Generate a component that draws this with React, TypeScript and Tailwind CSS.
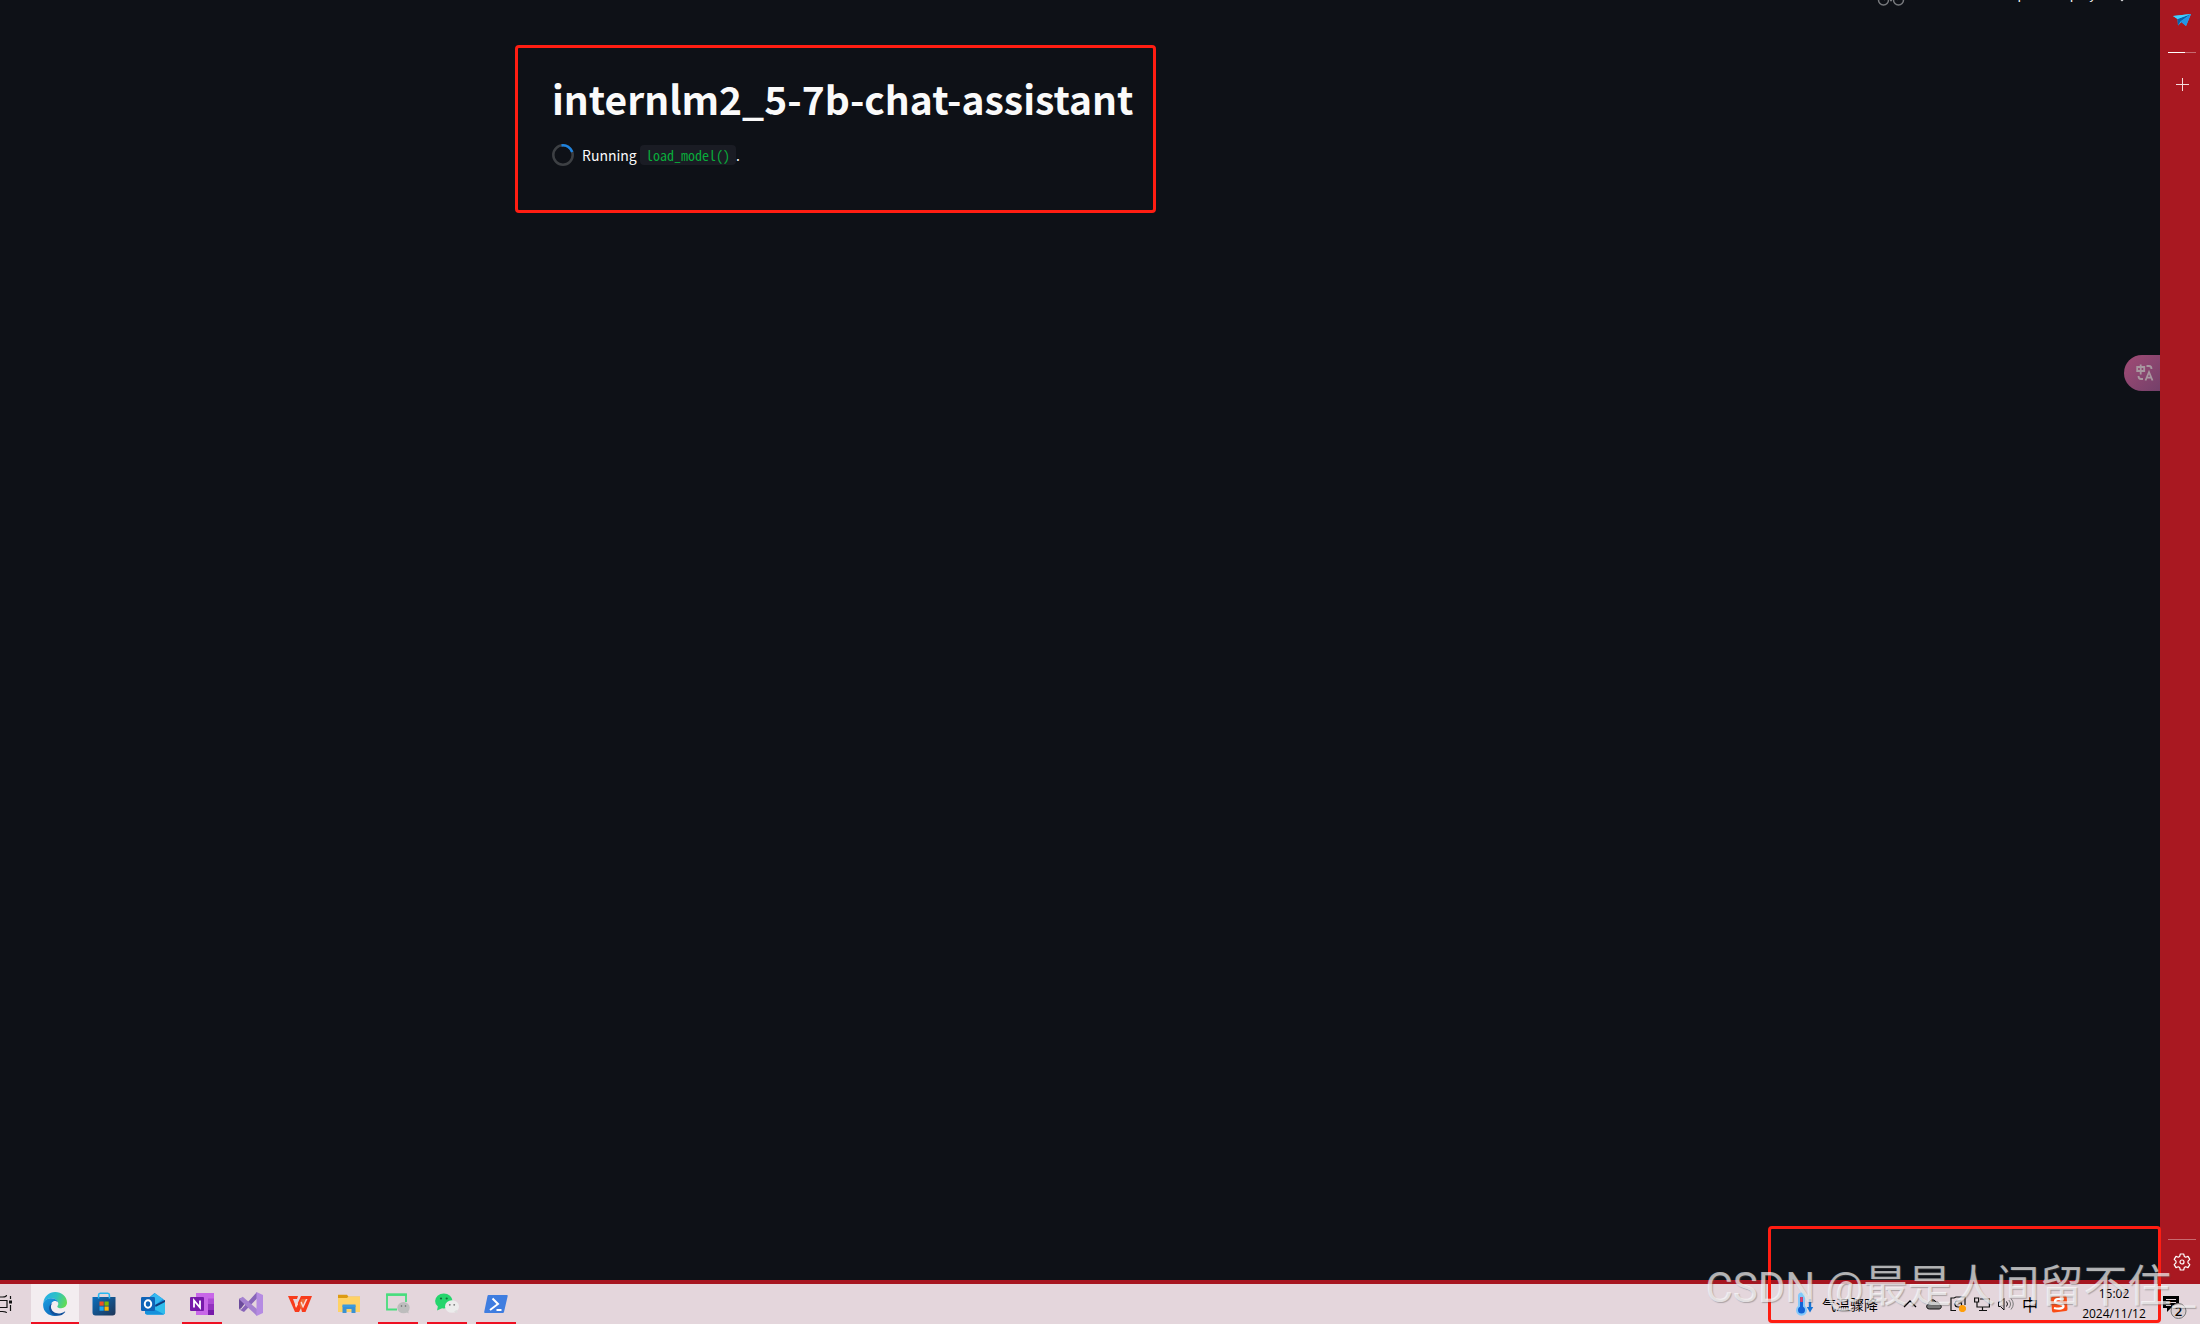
import type { ReactNode } from "react";

function EdgeIcon() {
  return (
    <svg viewBox="0 0 24 24" className="size-6">
      <defs>
        <linearGradient id="edge-top" x1="0" y1="0.3" x2="1" y2="0.6">
          <stop offset="0" stopColor="#27aee8" />
          <stop offset="0.5" stopColor="#2fc2c4" />
          <stop offset="1" stopColor="#63dc52" />
        </linearGradient>
        <linearGradient id="edge-left" x1="0" y1="0" x2="0.6" y2="1">
          <stop offset="0" stopColor="#1ba0e2" />
          <stop offset="1" stopColor="#0f6cbd" />
        </linearGradient>
      </defs>
      <path d="M.4 10.5C1.200 4.500 6 0 12.200 0 18.500 0 24 4.600 24 10.500c0 3.500-2.700 5.700-5.800 5.700-2.500 0-3.900-.8-3.900-1.800 0-.7 1-1 1-2.600C15.300 9 12.500 6.300 8.600 6.300 5 6.300 1.800 8 .4 10.500Z" fill="url(#edge-top)" />
      <path d="M.2 11.500C1.200 8.200 4.800 6.300 8.500 6.300c3.500 0 6 2 6.600 4.200-.8-1-2-1.500-3.200-1.500-2.500 0-4.200 2.500-4.200 5.300 0 4.700 3.300 8 7.300 9.200C6.500 25.500-.8 19.800.2 11.500Z" fill="url(#edge-left)" />
      <path d="M9.400 11.200c-2.400 2.300-1.800 6.700 1.400 8.900 3.200 2.200 7.400 1.700 10.600-.4.600-.4 1 .1.600.6-3 3.800-8 4.600-12 2.200-3.800-2.300-5-7.200-2.800-9.800.6-.8 1.400-1.300 2.200-1.500Z" fill="#11519b" />
    </svg>
  );
}

function StoreIcon() {
  return (
    <svg viewBox="0 0 24 24" className="size-6">
      <defs>
        <linearGradient id="store-bag" x1="0" y1="0" x2="1" y2="1">
          <stop offset="0" stopColor="#0b6fbe" />
          <stop offset="1" stopColor="#1e3556" />
        </linearGradient>
      </defs>
      <path d="M6.600 6V3c0-1 .6-1.700 1.600-1.700h7.600c1 0 1.600.7 1.600 1.700v3" fill="none" stroke="#28b7f0" strokeWidth="1.600" />
      <path d="M.5 5h23v15.500a3 3 0 0 1-3 3h-17a3 3 0 0 1-3-3Z" fill="url(#store-bag)" />
      <path d="M6.600 5v1.500M17.400 5v1.500" stroke="#28b7f0" strokeWidth="1.600" />
      <path d="M7.500 9.500h4.200v4.200H7.500Z" fill="#f25022" />
      <path d="M12.500 9.500h4.200v4.200h-4.200Z" fill="#7fba00" />
      <path d="M7.500 14.500h4.200v4.200H7.500Z" fill="#20a9f0" />
      <path d="M12.500 14.500h4.200v4.200h-4.200Z" fill="#ffb900" />
    </svg>
  );
}

function OutlookIcon() {
  return (
    <svg viewBox="0 0 24 24" className="size-6">
      <path d="M4 9 13.500 1 24 8.500v12a2 2 0 0 1-2 2H6a2 2 0 0 1-2-2Z" fill="#1490df" />
      <path d="M6 8 14 1.200 22 7l-8 6Z" fill="#35b8f1" />
      <path d="m14 13 10-5v3l-8 6Z" fill="#123b7c" />
      <path d="m5 20 19-10v10.500a2 2 0 0 1-2 2H6Z" fill="#30bdec" />
      <path d="m5 13 18 9.200-1 .3H6a2 2 0 0 1-2-2Z" fill="#1691dc" />
      <rect x="0" y="5" width="14" height="14" rx="1.200" fill="#0f64b8" />
      <ellipse cx="7" cy="12" rx="3.200" ry="3.700" fill="none" stroke="#fff" strokeWidth="2" />
    </svg>
  );
}

function OneNoteIcon() {
  return (
    <svg viewBox="0 0 24 24" className="size-6">
      <path d="M6 1h18v22H6Z" fill="#c867e8" />
      <path d="M18 6.500h6V12h-6Z" fill="#ae4bd5" />
      <path d="M18 12h6v5.500h-6Z" fill="#9332bf" />
      <path d="M18 17.500h6V23h-6Z" fill="#7719aa" />
      <rect x="0" y="5" width="14" height="14" rx="1" fill="#7719aa" />
      <path d="M4 15.500v-7l6 7v-7" fill="none" stroke="#fff" strokeWidth="1.800" />
    </svg>
  );
}

function VisualStudioIcon() {
  return (
    <svg viewBox="0 0 24 24" className="size-6">
      <path d="m0 7 2-1 5 4-5 6.500L0 17Z" fill="#6b4b9b" />
      <path d="m0 16.500 2 1.300L18 0v6.500L5 20 2 18.500 0 17Z" fill="#8865b9" />
      <path d="m0 7 3.800-2.200L18 17v7L2 9Z" fill="#a581d0" />
      <path d="m17.500 0 6.500 3v18l-6.500 3Z" fill="#b58be2" />
    </svg>
  );
}

function WpsIcon() {
  return (
    <svg viewBox="0 0 24 24" className="size-6">
      <path d="M0 4h10l-1 3H5l3 8 5-11h11l-6.500 16H14l-1-4-2 4H7Z" fill="#f83b1c" />
      <path d="m7 13 1 3 2-3.500-1-3Z" fill="#ffd9cd" />
      <path d="m13.500 7-2.300 5 2 5.200L17.500 7Z" fill="#ef6b35" />
      <path d="m12.500 10.500 2.500 6L19.500 7h-1.700L15 13l-1.200-3.500Z" fill="#f9ddd5" />
    </svg>
  );
}

function FolderIcon() {
  return (
    <svg viewBox="0 0 24 24" className="size-6">
      <path d="M1 2.800h9l1.500 2H23v15H1Z" fill="#dd9b13" />
      <path d="M1 6h9l1.500-1.500H23V20H1Z" fill="#ffd266" />
      <path d="M5.500 21v-7.500h13V21h-4v-4h-5v4Z" fill="#3b91d2" />
      <path d="M5.500 12.500h13V15h-13Z" fill="#3a9be0" />
    </svg>
  );
}

function WeChatWindowIcon() {
  return (
    <svg viewBox="0 0 24 24" className="size-6">
      <path d="M11 17.500H1V2.500h19V10" fill="none" stroke="#48dd7d" strokeWidth="1.800" />
      <path d="M.2 1.600h20.700v2.300H.2Z" fill="#48dd7d" />
      <ellipse cx="17.500" cy="15.700" rx="6.200" ry="5.600" fill="#bdbdbd" />
      <path d="m19 19.500 3.700 2-.7-3.500Z" fill="#bdbdbd" />
      <circle cx="15.500" cy="14" r="0.800" fill="#666" />
      <circle cx="19.500" cy="14" r="0.800" fill="#666" />
    </svg>
  );
}

function WeChatIcon() {
  return (
    <svg viewBox="0 0 24 24" className="size-6">
      <ellipse cx="8.800" cy="9" rx="8.700" ry="7.600" fill="#25d56d" />
      <path d="m3 14-1 4.500 5-2.300Z" fill="#25d56d" />
      <circle cx="6" cy="6.500" r="1.100" fill="#126b39" />
      <circle cx="11.700" cy="6.500" r="1.100" fill="#126b39" />
      <ellipse cx="17" cy="14.500" rx="7" ry="6.300" fill="#ececec" />
      <path d="m19 19.500 3.500 2-.5-3.800Z" fill="#dedede" />
      <circle cx="14.800" cy="12.800" r="0.900" fill="#777" />
      <circle cx="19.200" cy="12.800" r="0.900" fill="#777" />
    </svg>
  );
}

function PowerShellIcon() {
  return (
    <svg viewBox="0 0 24 24" className="size-6">
      <path d="M4.500 3H23q.9 0 .7.900L20 20q-.2 1-1.200 1H1q-1 0-.8-1L3.500 4q.2-1 1-1Z" fill="#3f7de0" />
      <path d="m8.500 6.500 5.500 5.500-8 6M12.500 18h5" fill="none" stroke="#fff" strokeWidth="2" />
    </svg>
  );
}

const apps: { name: string; icon: ReactNode; active?: boolean; running?: boolean }[] = [
  { name: "Microsoft Edge", icon: <EdgeIcon />, active: true },
  { name: "Microsoft Store", icon: <StoreIcon /> },
  { name: "Outlook", icon: <OutlookIcon /> },
  { name: "OneNote", icon: <OneNoteIcon />, running: true },
  { name: "Visual Studio", icon: <VisualStudioIcon /> },
  { name: "WPS Office", icon: <WpsIcon /> },
  { name: "File Explorer", icon: <FolderIcon /> },
  { name: "WeChat window", icon: <WeChatWindowIcon />, running: true },
  { name: "WeChat", icon: <WeChatIcon />, running: true },
  { name: "PowerShell", icon: <PowerShellIcon />, running: true },
];

function AppHeader() {
  // scrolled almost out of view, only the bottom edge is left
  return (
    <header className="flex h-[6px] items-end justify-end overflow-hidden pr-9 text-[#fafafa]">
      <svg viewBox="0 0 28 20" className="mr-[92px] h-5 w-7 shrink-0" fill="none" stroke="#77797d" strokeWidth="1.500">
        <circle cx="6.500" cy="14" r="5" />
        <circle cx="21.500" cy="14" r="5" />
        <path d="m7 14 5-8h6l3 8M12 6l2.500 8" />
        <path d="M13 14.500h2" />
      </svg>
      <button className="mr-7 h-6 shrink-0 text-[13px] leading-5">Stop</button>
      <button className="mr-6 h-6 shrink-0 text-[13px] leading-5">Deploy</button>
      <svg viewBox="0 0 4 20" className="h-5 w-1 shrink-0" fill="#c9cacc">
        <circle cx="2" cy="3" r="1.300" />
        <circle cx="2" cy="9" r="1.300" />
        <circle cx="2" cy="14" r="1.300" />
      </svg>
    </header>
  );
}

function TranslateButton() {
  return (
    <button
      aria-label="Translate"
      className="absolute top-[355px] right-0 flex h-9 w-9 items-center rounded-l-full bg-linear-to-br from-[#a14b75] to-[#74406a] pl-3"
    >
      <svg viewBox="0 0 18 18" className="size-[18px]" fill="none" stroke="#a8979f" strokeWidth="1.800">
        <path d="M1.200 3h7v4h-7ZM4.700.5v10" />
        <path d="M10.500 2h2.500q2.500 0 2.500 3M2.500 12q0 3 2.500 3h2" />
        <path d="m9.500 16.500 3.500-8.500 3.500 8.500M10.800 13.700h4.500" />
      </svg>
    </button>
  );
}

function EdgeSidebar() {
  return (
    <aside className="flex w-10 shrink-0 flex-col items-center bg-[#a91821] pl-1">
      <button aria-label="Telegram" className="mt-3 h-4">
        <svg viewBox="0 0 18 16" className="h-4 w-[18px]">
          <path d="M0 4 18 2l-5 12-4.500-4L5 13.500 4.500 7Z" fill="#35b8f4" />
          <path d="M4.500 7 18 2 7.500 9.500 5 13.500Z" fill="#0861ab" />
          <path d="M7.500 9.500 18 2l-5 12Z" fill="#2495e5" />
          <path d="M0 4 18 2 4.500 7Z" fill="#40d0ff" />
        </svg>
      </button>
      <div className="mt-6 flex h-px w-7 bg-[#c76a70]">
        <span className="w-[17px] bg-white" />
      </div>
      <button aria-label="Add" className="mt-[25px] h-[13px]">
        <svg viewBox="0 0 13 13" className="size-[13px]" stroke="#f4dcde">
          <path d="M0 6.500h13M6.500 0v13" />
        </svg>
      </button>
      <div className="mt-auto h-px w-7 bg-[#c76a70]" />
      <button aria-label="Settings" className="mt-[13px] mb-[9px] h-[18px]">
        <svg viewBox="0 0 18 18" className="size-[18px]" fill="none" stroke="#fff" strokeWidth="1.200" strokeLinejoin="round">
          <path d="M7.300 1h3.400l.6 2.400 1.400.8 2.300-.8 1.800 3L15 8.200v1.600l1.800 1.800-1.800 3-2.300-.8-1.400.8-.6 2.400H7.300l-.6-2.400-1.400-.8-2.300.8-1.800-3L3 9.800V8.200L1.200 6.400l1.800-3 2.300.8 1.400-.8Z" />
          <circle cx="9" cy="9" r="2" />
        </svg>
      </button>
    </aside>
  );
}

function Tray() {
  return (
    <div className="flex h-full items-center pr-1 text-black">
      <button className="flex items-center gap-2">
        <svg viewBox="0 0 20 24" className="h-6 w-5">
          <path d="M4 4a3.500 3.500 0 0 1 7 0v10a5.500 5.500 0 1 1-7 0Z" fill="#83c8fa" />
          <path d="M7.500 5v13" stroke="#1261d6" strokeWidth="3" />
          <path d="M7.500 5v5" stroke="#e73d62" strokeWidth="2.500" />
          <circle cx="7.500" cy="18" r="3.500" fill="#1261d6" />
          <path d="M16 7v10" stroke="#1573d4" strokeWidth="2.400" />
          <path d="M12.800 15h6.400L16 20.500Z" fill="#1573d4" />
        </svg>
        <span className="text-sm">气温骤降</span>
      </button>
      <button aria-label="Show hidden icons" className="ml-6">
        <svg viewBox="0 0 16 16" className="size-4" fill="none" stroke="#000" strokeWidth="1.300">
          <path d="m2 11 6-6 6 6" />
        </svg>
      </button>
      <div className="ml-2 flex items-center gap-2">
        <svg viewBox="0 0 16 16" className="size-4" fill="#777" stroke="#111">
          <path d="M3.500 13C0 13-.3 8.800 2.500 8.300 2.300 4.500 7.500 1.500 10.300 6.300c2.500-.4 3.200 1 3.200 2.200 2.500.5 2.300 4.500-.5 4.500Z" />
        </svg>
        <svg viewBox="0 0 16 16" className="size-4" fill="none" stroke="#111" strokeWidth="1.200">
          <path d="M6 14.500H1V2h3l2-1h9v8" />
          <path d="M11.500 5H8q-3 0-3 3t3 3h2M8 7h3.500v3" />
          <circle cx="12.500" cy="12.500" r="3" fill="#ff9f0a" stroke="#ff9f0a" />
        </svg>
        <svg viewBox="0 0 16 16" className="size-4" fill="none" stroke="#111" strokeWidth="1.200">
          <path d="M.6 2h4v4h-4ZM6 3h9.400v8H3V6M8.500 11v3.500M5 14.500h8" />
        </svg>
        <svg viewBox="0 0 16 16" className="size-4" fill="none" stroke="#111">
          <path d="M.5 6v4.500h2L6 14V2.500L2.500 6ZM8.500 5.500q2 2.500 0 5" />
          <path d="M10.800 4q3.500 4 0 8M13 2.500q4.500 5.500 0 11" stroke="#777" />
        </svg>
      </div>
      <span className="ml-2 text-base leading-4">中</span>
      <svg viewBox="0 0 18 18" className="ml-3 size-[18px]">
        <path d="M3 1.500 15 .5q1.500 0 1.700 1.500l.8 12q0 1.800-1.500 2l-12 1.500q-1.700 0-2-1.500L1 3.500q0-1.800 2-2Z" fill="#fa4d16" />
        <path d="M14 4Q5 3 5 6.500C5 9.500 13.500 8 13.500 11 13.500 14 8 14 4 13" fill="none" stroke="#fff" strokeWidth="2.300" />
      </svg>
      <time className="ml-3 block w-[68px] text-center font-['Open_Sans',sans-serif] text-xs leading-5">
        15:02
        <br />
        2024/11/12
      </time>
      <button aria-label="Notifications, 2 new" className="ml-3 flex h-10 w-9 items-end">
        <svg viewBox="0 0 36 32" className="h-8 w-9">
          <path d="M3 4h16v12h-8l-4 4v-4H3Z" />
          <path d="M6 7.500h10M6 10.500h10M6 13.500h5" stroke="#e6d9de" />
          <circle cx="18.500" cy="19" r="7.500" fill="#d9ced2" stroke="#777" />
          <text x="18.500" y="24" textAnchor="middle" fontSize="13" fontWeight="600" fontFamily="Open Sans">2</text>
        </svg>
      </button>
    </div>
  );
}

function Taskbar() {
  return (
    <footer className="flex h-11 items-stretch justify-between border-t-4 border-[#a71520] bg-[#e4d6dc]">
      <nav className="flex gap-px">
        <button aria-label="Task view" className="w-[30px]">
          <svg viewBox="0 0 14 18" className="h-[18px] w-3.5" fill="none" stroke="#111" strokeWidth="1.200">
            <path d="M0 5.500h7v7H0M0 2h2.500q4 0 4-2M0 16.500h2.500q4 0 4 1.500M10.500 1v3M10.500 10v6" />
            <path d="M9 5.500h3v3H9Z" fill="#111" stroke="none" />
          </svg>
        </button>
        {apps.map((app) => (
          <button
            key={app.name}
            aria-label={app.name}
            className={`flex w-12 flex-col items-center ${app.active ? "bg-[#f3edf0]" : ""}`}
          >
            <span className="flex flex-1 items-center pt-[2px]">{app.icon}</span>
            <span
              className={`h-[2px] ${app.active ? "w-12" : "w-10"} ${
                app.active || app.running ? "bg-[#ee1022]" : ""
              }`}
            />
          </button>
        ))}
      </nav>
      <Tray />
    </footer>
  );
}

export default function App() {
  return (
    <div className="relative flex min-h-screen flex-col overflow-hidden bg-[#0e1117] font-['Noto_Sans_CJK_SC',sans-serif]">
      <div className="flex flex-1">
        <main className="relative min-w-0 flex-1">
          <AppHeader />
          <div className="pt-[39px] pl-[515px]">
            <section className="h-[168px] w-fit rounded-sm border-3 border-[#ff1d12] pt-[22px] pr-5 pl-[34px] text-[#fafafa]">
              <h1 className="text-[39px] leading-[56px] font-bold">internlm2_5-7b-chat-assistant</h1>
              <div className="mt-[17px] flex items-center gap-2 text-sm leading-6">
                <svg viewBox="0 0 22 22" className="size-[22px]" fill="none" strokeWidth="2.500">
                  <circle cx="11" cy="11" r="9.700" stroke="#3d4044" />
                  <path d="M9.500 1.400a9.700 9.700 0 0 1 10.700 6.600" stroke="#1c83e1" />
                </svg>
                <p>
                  Running{" "}
                  <code className="rounded bg-[#1a1c24] px-1.5 font-['Noto_Sans_Mono_CJK_SC','Liberation_Mono',monospace] text-sm text-[#09ab3b]">
                    load_model()
                  </code>
                  .
                </p>
              </div>
            </section>
          </div>
          <TranslateButton />
        </main>
        <EdgeSidebar />
      </div>
      <Taskbar />
      <div className="pointer-events-none absolute right-[39px] bottom-[1px] h-[97px] w-[393px] rounded-sm border-3 border-[#ff1d12]" />
      <p className="pointer-events-none absolute right-1 bottom-1 flex items-baseline whitespace-nowrap leading-[64px] text-white/65 [text-shadow:1px_1px_1px_#5556]">
        <span className="font-['Roboto',sans-serif] text-[42px]">CSDN @</span>
        <span className="font-['Noto_Sans_CJK_SC',sans-serif] text-[44px]">最是人间留不住_</span>
      </p>
    </div>
  );
}
